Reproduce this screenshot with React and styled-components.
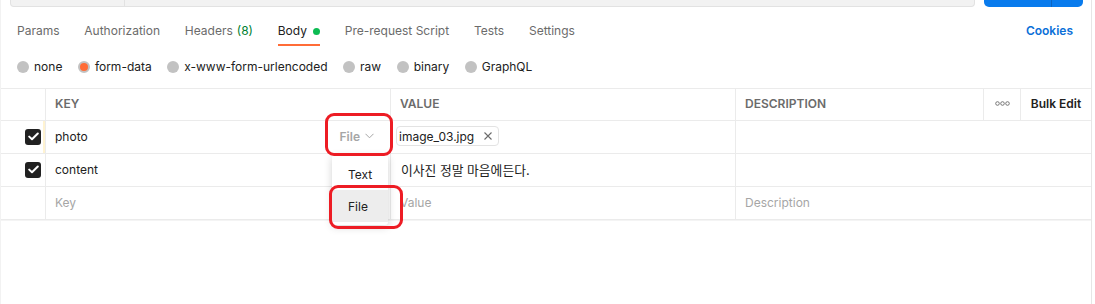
import React from "react";
import styled, { createGlobalStyle } from "styled-components";

const GlobalStyle = createGlobalStyle`
  html, body { margin: 0; padding: 0; background: #ffffff; }
  body { font-family: Inter, "Noto Sans", "Noto Sans CJK KR", sans-serif; font-size: 12px; color: #212121; }
  * { box-sizing: border-box; }
`;

const Page = styled.div`
  position: relative;
  width: 1092px;
  height: 304px;
  border-left: 1px solid #f2f2f2;
  border-right: 1px solid #e6e6e6;
  display: flex;
  flex-direction: column;
  overflow: hidden;
`;

const TopBar = styled.div`
  display: flex;
  gap: 9px;
  padding-left: 9px;
  height: 7px;
`;

const UrlBox = styled.div`
  width: 965px;
  height: 7px;
  background: #f2f2f2;
  border: 1px solid #e2e2e2;
  border-top: none;
  border-radius: 0 0 4px 4px;
  display: flex;
`;

const MethodPart = styled.div`
  width: 114px;
  border-right: 1px solid #e2e2e2;
`;

const SendButton = styled.div`
  width: 99px;
  height: 7px;
  background: #097bed;
  border-radius: 0 0 5px 5px;
  display: flex;
`;

const SendMain = styled.div`
  width: 68px;
  border-right: 1px solid #0a64c2;
`;

const TabBar = styled.div`
  display: flex;
  align-items: flex-start;
  justify-content: space-between;
  margin-top: 16px;
  padding: 0 18px 0 16px;
`;

const Tabs = styled.div`
  display: flex;
  gap: 24.8px;
`;

const Tab = styled.div`
  display: flex;
  align-items: center;
  height: 23px;
  padding-bottom: 5px;
  line-height: 16px;
  font-size: 12px;
  color: ${(p) => (p.$active ? "#212121" : "#6b6b6b")};
  border-bottom: 2px solid ${(p) => (p.$active ? "#ff6c37" : "transparent")};
  white-space: nowrap;
`;

const Count = styled.span`
  color: #007f31;
  margin-left: 4px;
`;

const Dot = styled.span`
  width: 7px;
  height: 7px;
  border-radius: 50%;
  background: #0cbb52;
  margin-left: 6px;
`;

const CookiesLink = styled.div`
  line-height: 16px;
  font-size: 12px;
  font-weight: 600;
  color: #0b6fd8;
`;

const RadioRow = styled.div`
  display: flex;
  gap: 15.5px;
  margin-top: 13px;
  padding-left: 16px;
  height: 16px;
`;

const RadioItem = styled.label`
  display: flex;
  align-items: center;
  gap: 5px;
  line-height: 16px;
  font-size: 12px;
  color: #212121;
`;

const RadioCircle = styled.span`
  width: 12px;
  height: 12px;
  border-radius: 50%;
  background: ${(p) => (p.$checked ? "#ff6c37" : "#c2c2c2")};
  border: ${(p) => (p.$checked ? "2px solid #c2c2c2" : "none")};
`;

const Table = styled.div`
  margin-top: 13px;
  border-top: 1px solid #ebebeb;
  display: grid;
  grid-template-columns: 44px 345px 345px 248px 37px 71px;
`;

const HeadCell = styled.div`
  height: 32px;
  display: flex;
  align-items: center;
  justify-content: ${(p) => (p.$center ? "center" : "flex-start")};
  padding: 0 ${(p) => (p.$center ? "0" : "9px")} 2px;
  border-bottom: 1px solid #ebebeb;
  border-left: ${(p) => (p.$first ? "none" : "1px solid #ebebeb")};
  font-size: 12px;
  font-weight: 600;
  color: ${(p) => (p.$dark ? "#212121" : "#6b6b6b")};
`;

const Cell = styled.div`
  height: 33px;
  display: flex;
  align-items: center;
  grid-column: ${(p) => p.$span || "auto"};
  padding: 0 ${(p) => p.$pad ?? 9}px 2px;
  border-bottom: 1px solid #ebebeb;
  border-left: ${(p) => (p.$first ? "none" : "1px solid #ebebeb")};
  font-size: 12px;
  color: ${(p) => (p.$placeholder ? "#a6a6a6" : "#212121")};
`;

const CheckCell = styled(Cell)`
  justify-content: flex-end;
  padding: 0 4px 1px 0;
  box-shadow: ${(p) => (p.$active ? "inset -2px 0 0 #fff3d1" : "none")};
`;

const KeyCell = styled(Cell)`
  justify-content: space-between;
  padding-right: 16px;
`;

const Checkbox = styled.span`
  width: 16px;
  height: 16px;
  border-radius: 3px;
  background: #212121;
  display: flex;
  align-items: center;
  justify-content: center;
`;

const TypeSelect = styled.span`
  display: flex;
  align-items: center;
  gap: 5px;
  color: #a6a6a6;
  font-weight: 600;
`;

const FileChip = styled.span`
  display: flex;
  align-items: center;
  gap: 10px;
  height: 20px;
  padding: 0 6px 0 2px;
  border: 1px solid #e3e3e3;
  border-radius: 4px;
  color: #212121;
`;

const KoreanText = styled.span`
  padding-left: 1px;
  font-size: 12.8px;
  font-family: Inter, "Noto Sans CJK KR", sans-serif;
`;

const EmptyArea = styled.div`
  flex: 1;
  border-top: 1px solid #f4f4f4;
  border-left: 1px solid #ebebeb;
  margin-left: -1px;
`;

const Menu = styled.div`
  position: absolute;
  left: 331px;
  top: 155px;
  width: 56px;
  padding: 3px 0;
  background: #ffffff;
  border-radius: 3px;
  box-shadow: 0 2px 8px rgba(0, 0, 0, 0.18);
`;

const MenuItem = styled.div`
  height: 32px;
  display: flex;
  align-items: center;
  padding-left: 16px;
  font-size: 12px;
  color: #212121;
  background: ${(p) => (p.$hover ? "#ededed" : "transparent")};
`;

const Annotation = styled.div`
  position: absolute;
  border: 3px solid #ed1c24;
  border-radius: 9px;
  pointer-events: none;
`;

const Check = () => (
  <svg width="11" height="9" viewBox="0 0 11 9">
    <path d="M1.2 4.6 L4 7.3 L9.8 1.5" fill="none" stroke="#fff" strokeWidth="2" strokeLinecap="round" strokeLinejoin="round" />
  </svg>
);

const Chevron = () => (
  <svg width="9" height="6" viewBox="0 0 9 6">
    <path d="M0.5 0.8 L4.5 4.8 L8.5 0.8" fill="none" stroke="#a6a6a6" strokeWidth="1" />
  </svg>
);

const Close = () => (
  <svg width="8" height="8" viewBox="0 0 8 8">
    <path d="M0.5 0.5 L7.5 7.5 M7.5 0.5 L0.5 7.5" stroke="#6b6b6b" strokeWidth="1.1" />
  </svg>
);

const Dots = () => (
  <svg width="15" height="5" viewBox="0 0 15 5">
    <circle cx="2.5" cy="2.5" r="1.8" fill="none" stroke="#6b6b6b" strokeWidth="0.9" />
    <circle cx="7.5" cy="2.5" r="1.8" fill="none" stroke="#6b6b6b" strokeWidth="0.9" />
    <circle cx="12.5" cy="2.5" r="1.8" fill="none" stroke="#6b6b6b" strokeWidth="0.9" />
  </svg>
);

const radios = [
  { label: "none" },
  { label: "form-data", checked: true },
  { label: "x-www-form-urlencoded" },
  { label: "raw" },
  { label: "binary" },
  { label: "GraphQL" },
];

export default function App() {
  return (
    <>
      <GlobalStyle />
      <Page>
        <TopBar>
          <UrlBox>
            <MethodPart />
          </UrlBox>
          <SendButton>
            <SendMain />
          </SendButton>
        </TopBar>

        <TabBar>
          <Tabs>
            <Tab>Params</Tab>
            <Tab>Authorization</Tab>
            <Tab>
              Headers<Count>(8)</Count>
            </Tab>
            <Tab $active>
              Body<Dot />
            </Tab>
            <Tab>Pre-request Script</Tab>
            <Tab>Tests</Tab>
            <Tab>Settings</Tab>
          </Tabs>
          <CookiesLink>Cookies</CookiesLink>
        </TabBar>

        <RadioRow>
          {radios.map((r) => (
            <RadioItem key={r.label}>
              <RadioCircle $checked={r.checked} />
              {r.label}
            </RadioItem>
          ))}
        </RadioRow>

        <Table>
          <HeadCell $first />
          <HeadCell>KEY</HeadCell>
          <HeadCell>VALUE</HeadCell>
          <HeadCell>DESCRIPTION</HeadCell>
          <HeadCell $center>
            <Dots />
          </HeadCell>
          <HeadCell $center $dark>
            Bulk Edit
          </HeadCell>

          <CheckCell $first $active>
            <Checkbox>
              <Check />
            </Checkbox>
          </CheckCell>
          <KeyCell>
            <span>photo</span>
            <TypeSelect>
              File
              <Chevron />
            </TypeSelect>
          </KeyCell>
          <Cell $pad={5}>
            <FileChip>
              image_03.jpg
              <Close />
            </FileChip>
          </Cell>
          <Cell $span="span 3" />

          <CheckCell $first>
            <Checkbox>
              <Check />
            </Checkbox>
          </CheckCell>
          <Cell>content</Cell>
          <Cell>
            <KoreanText>이사진 정말 마음에든다.</KoreanText>
          </Cell>
          <Cell $span="span 3" />

          <CheckCell $first />
          <Cell $placeholder>Key</Cell>
          <Cell $placeholder>Value</Cell>
          <Cell $placeholder $span="span 3">
            Description
          </Cell>
        </Table>

        <EmptyArea />

        <Menu>
          <MenuItem>Text</MenuItem>
          <MenuItem $hover>File</MenuItem>
        </Menu>

        <Annotation style={{ left: 324, top: 113, width: 68, height: 43 }} />
        <Annotation style={{ left: 328, top: 185, width: 74, height: 44 }} />
      </Page>
    </>
  );
}
